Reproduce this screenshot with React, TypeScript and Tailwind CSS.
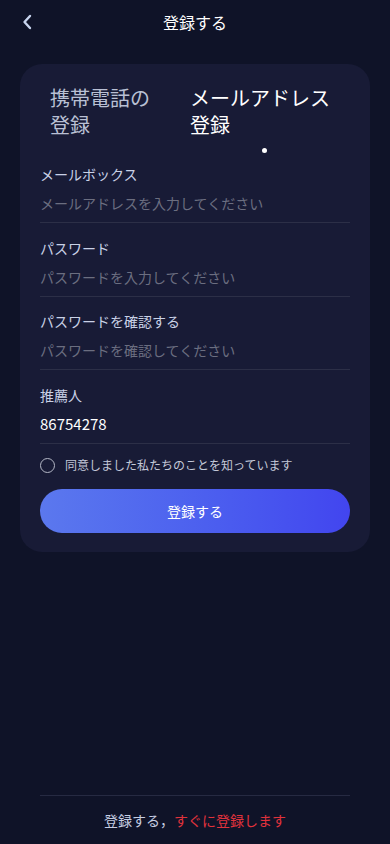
import React from "react";

function Field({ label, placeholder, value, className }: { label: string; placeholder?: string; value?: string; className?: string }) {
  return (
    <div className={"flex flex-col " + (className ?? "")}>
      <div className="h-[20px] leading-[20px] text-[14px] text-[#c9d1e6]">{label}</div>
      <div className="h-[39px] flex items-center border-b border-[#2c2f47]">
        {value ? (
          <span className="text-[15px] text-white">{value}</span>
        ) : (
          <span className="text-[14px] text-[#6b6e80]">{placeholder}</span>
        )}
      </div>
    </div>
  );
}

export default function App() {
  return (
    <div
      className="h-screen w-full bg-[#0f1328] flex flex-col"
      style={{ fontFamily: '"Noto Sans CJK JP", "Noto Sans", sans-serif' }}
    >
      <header className="relative h-[44px] flex items-center justify-center">
        <button className="absolute left-[17px] top-[12px] w-[20px] h-[20px] flex items-center justify-center">
          <svg width="12" height="16" viewBox="0 0 12 16" fill="none">
            <path d="M9 2 L3.5 8 L9 14" stroke="#c8d4ee" strokeWidth="2.4" strokeLinecap="round" strokeLinejoin="round" />
          </svg>
        </button>
        <h1 className="text-[16px] text-white">登録する</h1>
      </header>

      <div className="mx-[20px] mt-[20px] rounded-[22px] bg-[#181b36] px-[20px] pt-[20px] pb-[19px]">
        <div className="flex pl-[10px]">
          <div className="w-[110px] text-[20px] leading-[27px] text-[#b9c0d4]">携帯電話の登録</div>
          <div className="ml-[30px] w-[148px] flex flex-col">
            <div className="text-[20px] leading-[27px] text-white">メールアドレス登録</div>
            <div className="mt-[10px] flex justify-center">
              <div className="w-[5px] h-[5px] rounded-full bg-white" />
            </div>
          </div>
        </div>

        <div className="mt-[11px] flex flex-col">
          <Field label="メールボックス" placeholder="メールアドレスを入力してください" />
          <Field className="mt-[15px]" label="パスワード" placeholder="パスワードを入力してください" />
          <Field className="mt-[14px]" label="パスワードを確認する" placeholder="パスワードを確認してください" />
          <Field className="mt-[15px]" label="推薦人" value="86754278" />
        </div>

        <div className="mt-[10px] h-[22px] flex items-center">
          <div className="w-[15px] h-[15px] rounded-full border-[1.5px] border-[#b4b8c6]" />
          <span className="ml-[10px] text-[12px] text-[#c3c8d8]">同意しました私たちのことを知っています</span>
        </div>

        <button className="mt-[13px] w-full h-[44px] rounded-full bg-gradient-to-r from-[#5b78ee] to-[#4245ef] text-white text-[14px]">
          登録する
        </button>
      </div>

      <footer className="mt-auto mx-[40px] border-t border-[#262a42] h-[49px] flex items-center justify-center">
        <span className="text-[14px] text-[#c5cde2]">登録する，</span>
        <span className="text-[14px] text-[#e0323c]">すぐに登録します</span>
      </footer>
    </div>
  );
}
